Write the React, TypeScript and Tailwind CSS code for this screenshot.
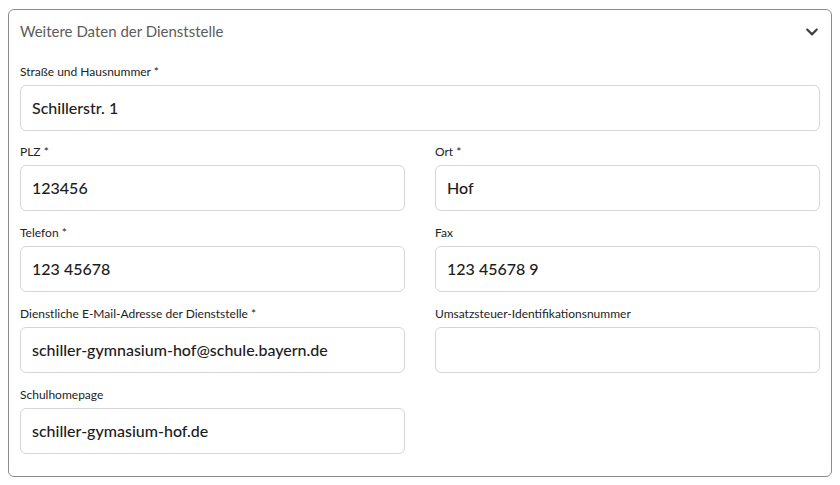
import { FaChevronDown } from "react-icons/fa"

type FieldProps = { label: string; value?: string }

function Field({ label, value }: FieldProps) {
  return (
    <div className="flex flex-col">
      <label className="text-[12px] leading-4 h-4 mb-[5px] text-[#222]">{label}</label>
      <div className="h-[46px] rounded-md border border-[#d6d6d6] bg-white pl-[11px] pr-3 flex items-center text-[16px] font-medium text-[#1c1c1c]">
        {value}
      </div>
    </div>
  )
}

export default function App() {
  return (
    <div className="min-h-screen bg-white pt-[9px]" style={{ fontFamily: "Lato, 'Noto Sans', sans-serif" }}>
      <div className="mx-2 rounded-md border border-[#8c8c8c] px-[11px] pb-[22px]">
        <div className="h-[43px] flex items-center justify-between">
          <span className="text-[15px] text-[#5c5c5c]">Weitere Daten der Dienststelle</span>
          <FaChevronDown className="text-[#3f3f3f] mr-[1px]" size={14} />
        </div>
        <div className="pt-[11px] flex flex-col gap-[13px]">
          <Field label="Straße und Hausnummer *" value="Schillerstr. 1" />
          <div className="grid grid-cols-2 gap-x-[30px] gap-y-[14px]">
            <Field label="PLZ *" value="123456" />
            <Field label="Ort *" value="Hof" />
            <Field label="Telefon *" value="123 45678" />
            <Field label="Fax" value="123 45678 9" />
            <Field label="Dienstliche E-Mail-Adresse der Dienststelle *" value="schiller-gymnasium-hof@schule.bayern.de" />
            <Field label="Umsatzsteuer-Identifikationsnummer" />
            <Field label="Schulhomepage" value="schiller-gymasium-hof.de" />
          </div>
        </div>
      </div>
    </div>
  )
}
